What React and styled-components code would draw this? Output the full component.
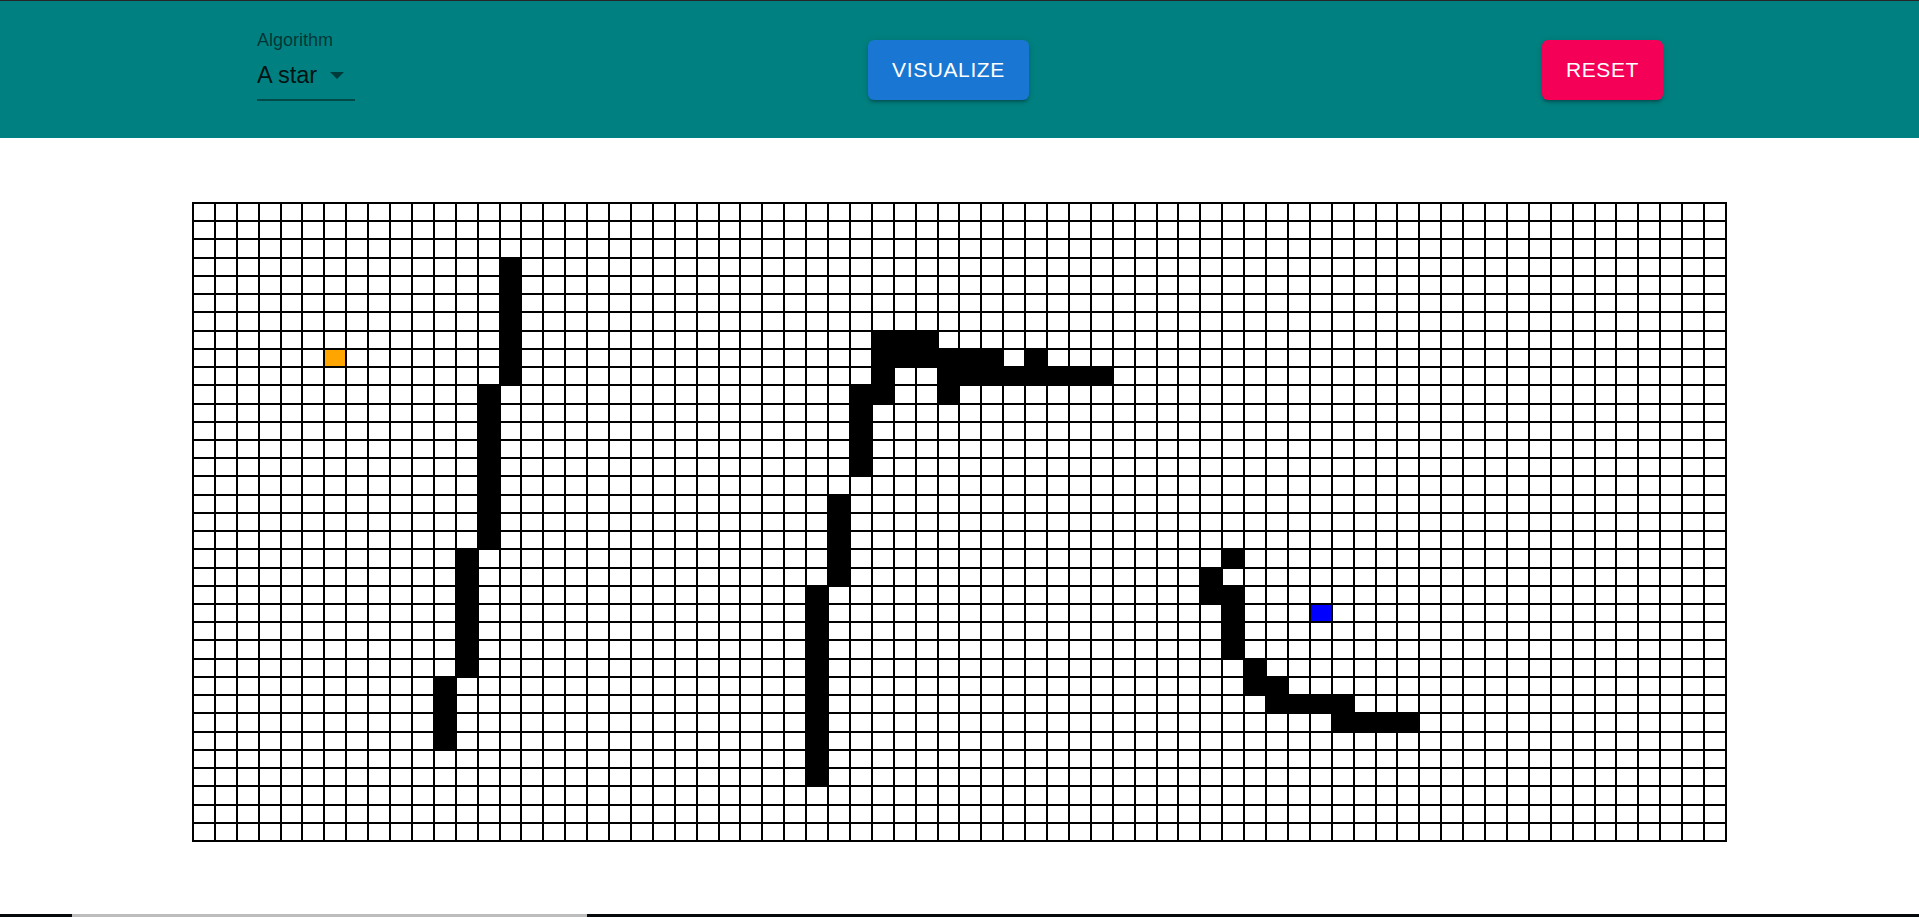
import React from 'react'
import styled, { createGlobalStyle } from 'styled-components'

const ROWS = 35
const COLS = 70
const START = [8, 6]
const FINISH = [22, 51]

// walls: vertical runs [fromRow, toRow, col], horizontal runs [row, fromCol, toCol]
const vertical = [
  [3, 9, 14],
  [10, 18, 13],
  [19, 25, 12],
  [26, 29, 11],
  [21, 31, 28],
  [16, 20, 29],
  [10, 14, 30],
  [7, 10, 31],
  [22, 24, 47],
  [20, 21, 46],
]
const horizontal = [
  [7, 31, 33],
  [8, 31, 36],
  [8, 38, 38],
  [9, 34, 41],
  [10, 34, 34],
  [19, 47, 47],
  [21, 47, 47],
  [25, 48, 48],
  [26, 48, 49],
  [27, 49, 52],
  [28, 52, 55],
]

function buildWalls() {
  const walls = new Set()
  vertical.forEach(([a, b, c]) => {
    for (let r = a; r <= b; r++) walls.add(r + ',' + c)
  })
  horizontal.forEach(([r, a, b]) => {
    for (let c = a; c <= b; c++) walls.add(r + ',' + c)
  })
  return walls
}

const GlobalStyle = createGlobalStyle`
  html, body {
    margin: 0;
    padding: 0;
    background: #fff;
    font-family: "Liberation Sans", Arial, sans-serif;
  }
`

function App() {
  const walls = buildWalls()
  const cells = []
  for (let r = 0; r < ROWS; r++) {
    for (let c = 0; c < COLS; c++) {
      let kind = 'empty'
      if (r === START[0] && c === START[1]) kind = 'start'
      else if (r === FINISH[0] && c === FINISH[1]) kind = 'finish'
      else if (walls.has(r + ',' + c)) kind = 'wall'
      cells.push(<Node key={r + '-' + c} kind={kind} />)
    }
  }

  return (
    <Page>
      <GlobalStyle />
      <Header>
        <SelectControl>
          <SelectLabel>Algorithm</SelectLabel>
          <SelectInput>
            <span>A star</span>
            <svg width="14" height="7" viewBox="0 0 14 7">
              <path d="M0 0 L14 0 L7 7 Z" fill="rgba(0,0,0,0.54)" />
            </svg>
          </SelectInput>
          <Underline />
        </SelectControl>
        <Button color="#1976d2">Visualize</Button>
        <Button color="#f50057">Reset</Button>
      </Header>
      <Main>
        <Grid>{cells}</Grid>
      </Main>
      <TaskStrip>
        <StripThumb />
      </TaskStrip>
    </Page>
  )
}

export default App

const Page = styled.div`
  min-height: 100vh;
  display: flex;
  flex-direction: column;
`

const Header = styled.header`
  height: 137px;
  border-top: 1px solid #262626;
  background-color: #008080;
  display: flex;
  justify-content: space-between;
  align-items: center;
  padding: 0 256px 0 257px;
`

const SelectControl = styled.div`
  width: 98px;
  align-self: flex-start;
  margin-top: 30px;
  display: flex;
  flex-direction: column;
`

const SelectLabel = styled.label`
  font-size: 18px;
  line-height: 18px;
  height: 18px;
  color: rgba(0, 0, 0, 0.6);
`

const SelectInput = styled.div`
  margin-top: 3px;
  padding: 6px 11px 7px 0;
  height: 34px;
  display: flex;
  align-items: center;
  justify-content: space-between;
  font-size: 23.5px;
  line-height: 34px;
  color: rgba(0, 0, 0, 0.87);

  svg {
    margin-top: 1px;
  }
`

const Underline = styled.div`
  height: 2px;
  background: rgba(0, 0, 0, 0.42);
`

const Button = styled.button`
  height: 60px;
  padding: 0 24px;
  border: none;
  border-radius: 6px;
  background-color: ${props => props.color};
  color: #fff;
  font-family: "Liberation Sans", Arial, sans-serif;
  font-size: 21px;
  letter-spacing: 0.6px;
  text-transform: uppercase;
  cursor: pointer;
  box-shadow: 0px 4px 2px -3px rgba(0, 0, 0, 0.2),
    0px 3px 3px 0px rgba(0, 0, 0, 0.14),
    0px 1px 7px 0px rgba(0, 0, 0, 0.12);
`

const Main = styled.main`
  padding-top: 64px;
  display: flex;
  justify-content: center;
`

const Grid = styled.div`
  width: 1535px;
  height: 640px;
  box-sizing: border-box;
  display: grid;
  grid-template-columns: repeat(${COLS}, 1fr);
  grid-template-rows: repeat(${ROWS}, 1fr);
  gap: 2px;
  padding: 2px;
  background: #000;
`

const nodeColors = {
  empty: '#fff',
  wall: '#000',
  start: '#ffa500',
  finish: '#0000ff',
}

const Node = styled.div`
  background-color: ${props => nodeColors[props.kind]};
`

const TaskStrip = styled.div`
  margin-top: auto;
  height: 3px;
  background: #06090c;
  display: flex;
`

const StripThumb = styled.div`
  margin-left: 72px;
  width: 515px;
  background: #bdbdbd;
`
